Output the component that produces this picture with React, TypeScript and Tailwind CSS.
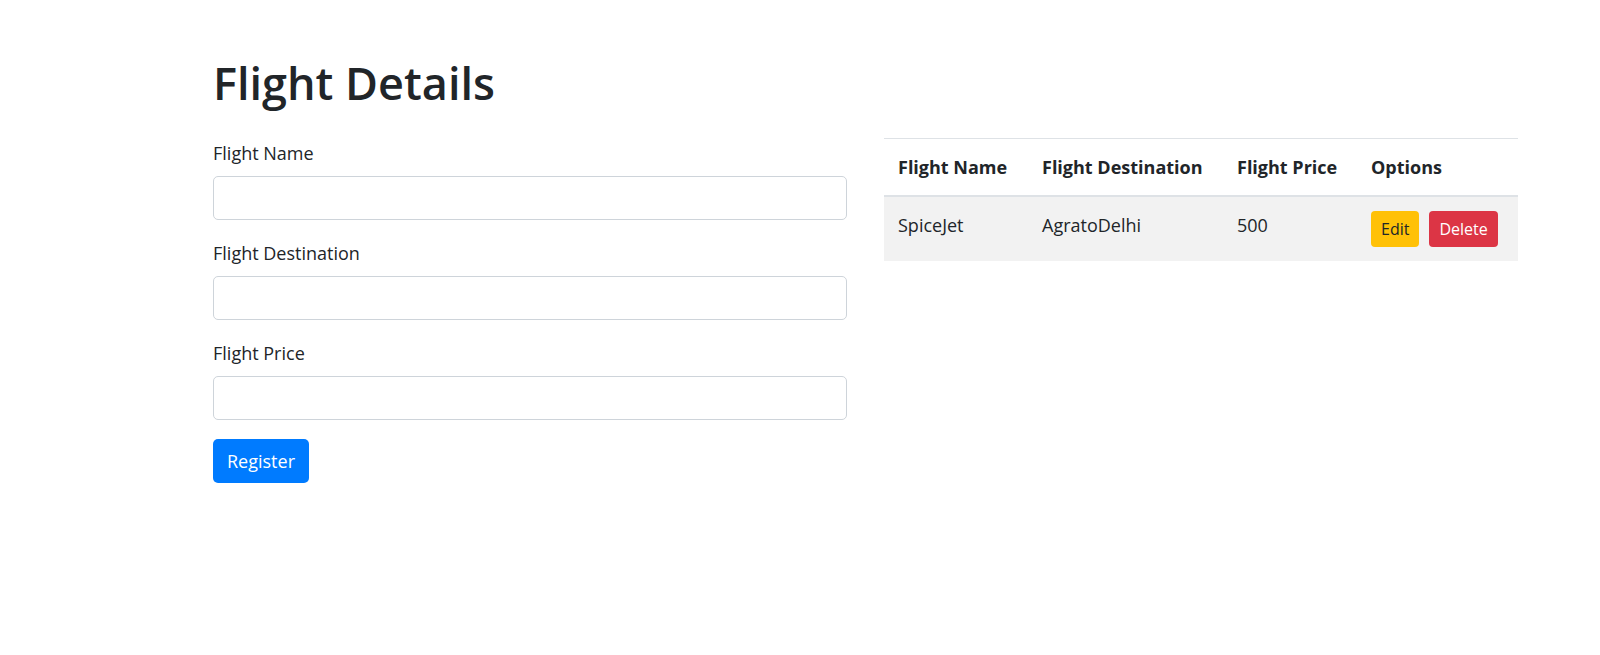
import React from 'react';

const flights = [{ name: 'SpiceJet', destination: 'AgratoDelhi', price: '500' }];

const App = () => {
  const fields = ['Flight Name', 'Flight Destination', 'Flight Price'];

  return (
    <div
      className="min-h-screen bg-white text-[#212529] pt-[55px] pl-[213px]"
      style={{ fontFamily: '"Open Sans", "Noto Sans", sans-serif' }}
    >
      <h1 className="text-[45px] leading-[55px] font-semibold mb-[28px]">Flight Details</h1>

      <div className="flex gap-[37px]">
        {/* form */}
        <div className="w-[634px] pt-px">
          {fields.map((label) => (
            <div key={label} className="mb-[19px]">
              <label className="block text-[18px] leading-[28px] mb-[9px]">{label}</label>
              <input
                type="text"
                className="block w-full h-[44px] px-[14px] border border-[#ced4da] rounded-[5px] bg-white outline-none"
              />
            </div>
          ))}
          <button className="h-[44px] px-[14px] rounded-[5px] bg-[#007bff] text-white text-[18px] leading-[28px]">
            Register
          </button>
        </div>

        {/* table */}
        <div className="w-[634px]">
          <table className="w-full border-collapse text-[18px] leading-[28px]">
            <thead>
              <tr>
                <th className="w-[144px] text-left font-bold align-bottom p-[14px] border-t border-b-2 border-[#dee2e6]">Flight Name</th>
                <th className="w-[195px] text-left font-bold align-bottom p-[14px] border-t border-b-2 border-[#dee2e6]">Flight Destination</th>
                <th className="w-[134px] text-left font-bold align-bottom p-[14px] border-t border-b-2 border-[#dee2e6]">Flight Price</th>
                <th className="text-left font-bold align-bottom p-[14px] border-t border-b-2 border-[#dee2e6]">Options</th>
              </tr>
            </thead>
            <tbody>
              {flights.map((f, i) => (
                <tr key={i} className="bg-[#f2f2f2]">
                  <td className="align-top p-[14px] border-t border-[#dee2e6]">{f.name}</td>
                  <td className="align-top p-[14px] border-t border-[#dee2e6]">{f.destination}</td>
                  <td className="align-top p-[14px] border-t border-[#dee2e6]">{f.price}</td>
                  <td className="align-top p-[14px] border-t border-[#dee2e6]">
                    <div className="flex gap-[10px]">
                      <button className="h-[36px] px-[10px] rounded-[4px] bg-[#ffc107] text-[#212529] text-[16px] leading-[24px]">Edit</button>
                      <button className="h-[36px] px-[10px] rounded-[4px] bg-[#dc3545] text-white text-[16px] leading-[24px]">Delete</button>
                    </div>
                  </td>
                </tr>
              ))}
            </tbody>
          </table>
        </div>
      </div>
    </div>
  );
};

export default App;
